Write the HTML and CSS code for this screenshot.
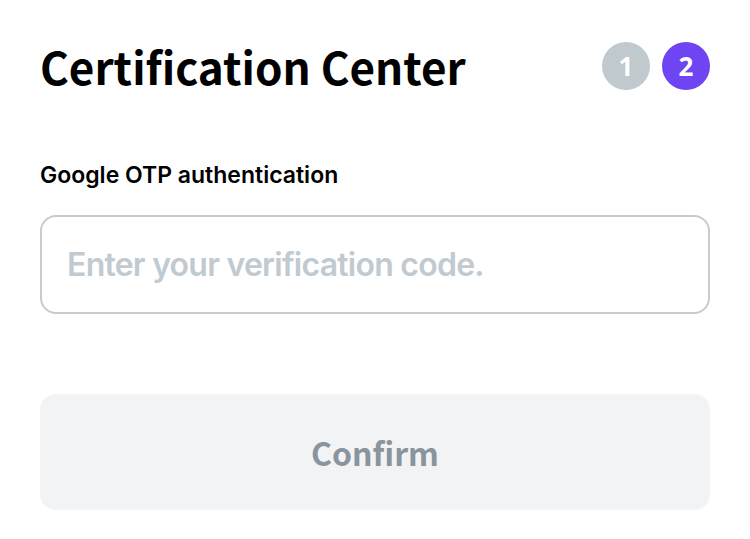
FILE: index.html
```html
<!DOCTYPE html>
<html lang="en">
<head>
<meta charset="utf-8">
<title>Certification Center</title>
<link rel="stylesheet" href="styles.css">
</head>
<body>
<main class="page">
  <header class="head">
    <h1 class="title">Certification Center</h1>
    <div class="steps">
      <span class="step">1</span>
      <span class="step step-active">2</span>
    </div>
  </header>
  <label class="label" for="otp">Google OTP authentication</label>
  <input class="input" id="otp" type="text" placeholder="Enter your verification code.">
  <button class="btn" type="button">Confirm</button>
</main>
</body>
</html>
```
FILE: styles.css
```css
html, body {
  margin: 0;
  padding: 0;
  background: #ffffff;
}
.page {
  padding: 40px 40px 0 40px;
  display: flex;
  flex-direction: column;
}
.head {
  display: flex;
  justify-content: space-between;
  align-items: center;
  height: 52px;
}
.title {
  margin: 0;
  font-family: "Noto Sans CJK KR", "Noto Sans", sans-serif;
  font-weight: 700;
  font-size: 44px;
  line-height: 52px;
  color: #000;
}
.steps {
  display: flex;
  gap: 12px;
}
.step {
  width: 48px;
  height: 48px;
  border-radius: 50%;
  background: #bfc9ce;
  color: #fff;
  font-family: "Open Sans", sans-serif;
  font-weight: 700;
  font-size: 26px;
  display: flex;
  align-items: center;
  justify-content: center;
}
.step-active {
  background: #6f44f2;
}
.label {
  margin-top: 69px;
  font-family: Inter, sans-serif;
  font-weight: 600;
  font-size: 23px;
  color: #000;
}
.input {
  margin-top: 26px;
  height: 99px;
  box-sizing: border-box;
  border: 2px solid #c3ccd3;
  border-radius: 16px;
  padding: 0 25px;
  font-family: Inter, sans-serif;
  font-weight: 600;
  font-size: 32px;
  letter-spacing: -0.75px;
  color: #000;
  outline: none;
}
.input::placeholder {
  color: #c1cad0;
}
.btn {
  margin-top: 80px;
  height: 116px;
  border: none;
  border-radius: 16px;
  background: #f2f3f5;
  font-family: "Noto Sans CJK KR", "Noto Sans", sans-serif;
  font-weight: 700;
  font-size: 32px;
  color: #8a949c;
}
```
